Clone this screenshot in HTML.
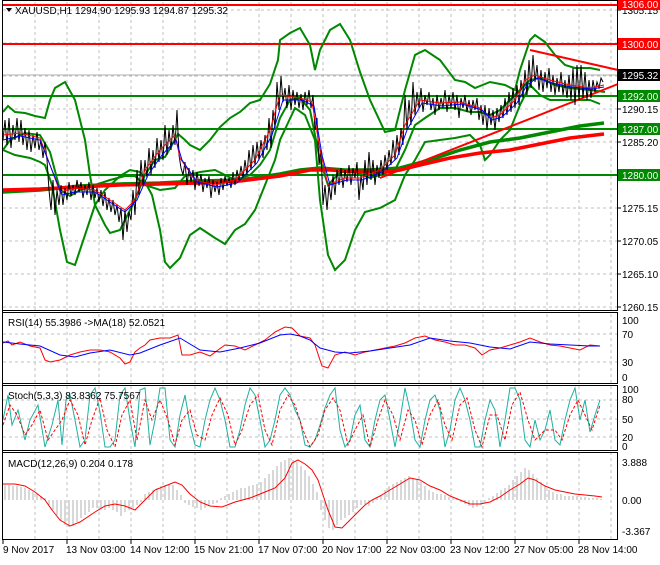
<!DOCTYPE html>
<html><head><meta charset="utf-8"><style>
html,body{margin:0;padding:0;background:#fff;}
body{width:660px;height:560px;overflow:hidden;position:relative;font-family:"Liberation Sans",sans-serif;}
svg text{font-family:"Liberation Sans",sans-serif;font-size:10px;fill:#000;}
</style></head><body>
<svg width="660" height="560" viewBox="0 0 660 560" xmlns="http://www.w3.org/2000/svg">
<defs>
<pattern id="vg" width="32" height="10" patternUnits="userSpaceOnUse" x="3">
<line x1="0.5" y1="0" x2="0.5" y2="3" stroke="#c0c0c0"/>
<line x1="0.5" y1="6" x2="0.5" y2="9" stroke="#c0c0c0"/>
</pattern>
</defs>
<!-- grids -->
<g stroke="#c0c0c0" stroke-dasharray="3,3">
<line x1="3" y1="10" x2="618" y2="10"/><line x1="3" y1="43" x2="618" y2="43"/><line x1="3" y1="76" x2="618" y2="76"/><line x1="3" y1="109" x2="618" y2="109"/><line x1="3" y1="142" x2="618" y2="142"/><line x1="3" y1="175" x2="618" y2="175"/><line x1="3" y1="208" x2="618" y2="208"/><line x1="3" y1="241" x2="618" y2="241"/><line x1="3" y1="274" x2="618" y2="274"/><line x1="3" y1="307" x2="618" y2="307"/>
<line x1="3" y1="334" x2="618" y2="334"/><line x1="3" y1="362" x2="618" y2="362"/>
<line x1="3" y1="400" x2="618" y2="400"/><line x1="3" y1="419" x2="618" y2="419"/><line x1="3" y1="437" x2="618" y2="437"/>
</g>
<g stroke="#c0c0c0" stroke-dasharray="3,3">
<line x1="35" y1="2" x2="35" y2="540"/><line x1="67" y1="2" x2="67" y2="540"/><line x1="99" y1="2" x2="99" y2="540"/><line x1="131" y1="2" x2="131" y2="540"/><line x1="163" y1="2" x2="163" y2="540"/><line x1="195" y1="2" x2="195" y2="540"/><line x1="227" y1="2" x2="227" y2="540"/><line x1="259" y1="2" x2="259" y2="540"/><line x1="291" y1="2" x2="291" y2="540"/><line x1="323" y1="2" x2="323" y2="540"/><line x1="355" y1="2" x2="355" y2="540"/><line x1="387" y1="2" x2="387" y2="540"/><line x1="419" y1="2" x2="419" y2="540"/><line x1="451" y1="2" x2="451" y2="540"/><line x1="483" y1="2" x2="483" y2="540"/><line x1="515" y1="2" x2="515" y2="540"/><line x1="547" y1="2" x2="547" y2="540"/><line x1="579" y1="2" x2="579" y2="540"/><line x1="611" y1="2" x2="611" y2="540"/>
</g>
<!-- main: horizontal levels -->
<line x1="3" y1="5" x2="618" y2="5" stroke="#f00" stroke-width="2"/>
<line x1="3" y1="44" x2="618" y2="44" stroke="#f00" stroke-width="2"/>
<line x1="3" y1="96" x2="618" y2="96" stroke="#080" stroke-width="2"/>
<line x1="3" y1="129" x2="618" y2="129" stroke="#080" stroke-width="2"/>
<line x1="3" y1="175" x2="618" y2="175" stroke="#080" stroke-width="2"/>
<line x1="3" y1="75" x2="618" y2="75" stroke="#b0b0b0"/>
<!-- bollinger -->
<g fill="none" stroke="#080" stroke-width="2">
<polyline points="3,112 8,106 15,112 25,113 35,116 45,118 50,100 55,88 65,82 75,100 85,140 90,175 95,205 105,225 110,233 120,230 135,200 145,175 155,160 165,157 172,145 178,134 185,140 190,145 200,150 210,140 220,127 230,118 240,112 250,103 260,100 270,84 278,60 280,40 290,33 300,28 310,45 315,70 320,50 330,30 340,24 350,40 360,72 370,100 385,132 395,130 405,90 415,55 425,50 440,60 455,80 465,82 475,88 490,82 505,85 515,90 520,70 530,40 535,35 545,42 555,55 565,65 575,68 590,68 600,70"/>
<polyline points="3,150 15,155 30,158 40,162 45,165 52,185 60,230 67,262 75,265 85,235 95,205 105,190 120,176 130,170 140,172 145,182 152,195 160,230 165,262 170,268 180,258 190,235 200,228 215,238 225,244 235,230 245,224 255,210 265,185 275,160 280,140 287,125 295,108 305,115 315,140 320,200 328,255 335,270 345,260 355,230 365,212 380,208 395,200 405,175 415,160 425,142 440,140 455,138 470,135 480,145 485,160 490,155 500,140 510,130 520,105 530,85 540,95 550,100 560,100 575,100 590,100 600,104"/>
<polyline points="3,150 10,140 25,133 40,135 50,152 60,190 70,196 80,190 95,185 110,180 125,176 135,176 145,185 160,190 175,188 185,176 200,172 215,170 225,175 235,180 250,175 260,165 270,150 280,118 290,100 300,98 310,110 320,160 328,185 340,172 355,172 370,178 380,175 395,170 405,150 415,125 425,118 440,108 455,108 470,112 480,112 490,115 500,110 510,100 520,90 530,80 540,78 555,85 570,88 590,90 605,92"/>
</g>
<!-- thick MAs -->
<polyline fill="none" stroke="#080" stroke-width="3.5" points="3,192 40,190 80,186 120,184 160,183 200,181 240,180 280,174 300,170 320,168 345,170 370,170 400,168 430,160 460,150 490,142 520,138 550,132 580,126 604,123"/>
<polyline fill="none" stroke="#f00" stroke-width="3.5" points="3,190 40,189 80,187 120,185 160,184 200,183 240,181 280,176 310,170 330,170 360,172 385,172 400,170 420,165 450,158 480,153 510,150 540,144 570,138 604,134"/>
<!-- trendlines -->
<line x1="380" y1="178" x2="618" y2="84" stroke="#f00" stroke-width="2"/>
<line x1="530" y1="50" x2="618" y2="70" stroke="#f00" stroke-width="2"/>
<!-- price bars -->
<polyline fill="none" stroke="#000" stroke-width="1" points="3,140 5,120 7,145 9,118 11,148 13,125 15,140 17,118 19,142 21,120 23,145 25,128 27,150 29,130 31,152 33,135 35,148 37,132 39,150 41,140 43,158 45,142 47,160 49,190 51,210 53,180 55,215 57,190 59,205 61,185 63,205 65,188 67,200 69,182 71,196 73,185 75,195 77,180 79,192 81,182 83,198 85,185 87,195 89,182 91,200 93,185 95,198 97,188 99,202 101,190 103,206 105,192 107,210 109,198 111,212 113,200 115,215 117,205 119,222 121,208 123,240 125,210 127,232 129,212 131,220 133,190 135,215 137,170 139,195 141,160 143,185 145,160 147,178 149,148 151,175 153,150 155,168 157,138 159,162 161,140 163,160 165,125 167,155 169,130 171,150 173,125 175,145 177,110 179,155 181,168 183,175 185,162 187,185 189,168 191,182 193,170 195,190 197,172 199,186 201,174 203,192 205,178 207,188 209,176 211,198 213,180 215,192 217,182 219,195 221,178 223,190 225,176 227,186 229,178 231,188 233,172 235,185 237,170 239,180 241,166 243,178 245,160 247,175 249,150 251,170 253,145 255,165 257,142 259,160 261,140 263,158 265,135 267,150 269,118 271,148 273,110 275,128 277,82 279,110 281,76 283,102 285,88 287,108 289,85 291,110 293,90 295,105 297,92 299,108 301,94 303,110 305,92 307,105 309,90 311,108 313,95 315,130 317,118 319,165 321,150 323,205 325,185 327,210 329,185 331,200 333,175 335,195 337,170 339,185 341,168 343,188 345,170 347,182 349,165 351,185 353,168 355,178 357,162 359,200 361,175 363,190 365,160 367,185 369,152 371,180 373,160 375,185 377,165 379,178 381,160 383,175 385,155 387,170 389,150 391,165 393,140 395,160 397,135 399,155 401,128 403,145 405,95 407,130 409,100 411,125 413,82 415,115 417,92 419,108 421,88 423,112 425,95 427,105 429,92 431,110 433,98 435,115 437,95 439,110 441,98 443,108 445,90 447,112 449,95 451,108 453,92 455,110 457,95 459,118 461,98 463,108 465,95 467,112 469,100 471,115 473,100 475,110 477,98 479,120 481,105 483,125 485,105 487,130 489,108 491,125 493,110 495,130 497,108 499,122 501,105 503,118 505,98 507,115 509,92 511,112 513,88 515,108 517,85 519,105 521,80 523,98 525,70 527,95 529,60 531,88 533,55 535,82 537,65 539,90 541,70 543,92 545,72 547,88 549,68 551,92 553,75 555,95 557,78 559,92 561,72 563,95 565,80 567,98 569,75 571,100 573,68 575,105 577,65 579,100 581,65 583,98 585,72 587,100 589,80 591,98 593,80 595,92 597,82 599,88 601,78 603,82"/>
<polyline fill="none" stroke="#f00" stroke-width="1" points="3,135 20,133 40,138 50,165 60,192 75,188 95,190 110,200 125,210 135,200 145,170 160,150 175,135 180,158 195,180 215,185 235,180 255,160 270,130 280,95 300,98 312,102 320,150 328,185 345,178 360,178 380,170 395,155 405,125 420,100 440,103 460,102 480,108 490,118 500,115 515,100 525,80 535,75 550,80 570,85 590,88 604,85"/>
<polyline fill="none" stroke="#00f" stroke-width="1" points="3,140 20,136 40,140 52,170 62,195 75,192 95,192 110,202 125,212 137,200 148,175 162,155 176,140 182,160 197,182 217,187 237,183 257,163 272,135 283,100 302,100 314,106 322,155 330,185 347,180 362,180 382,172 397,158 407,130 422,103 442,106 462,104 482,110 492,120 502,117 517,103 527,85 537,78 552,83 572,87 592,89 604,87"/>
<!-- RSI -->
<polyline fill="none" stroke="#f00" points="3,343 8,341 12,345 20,342 30,346 40,348 45,360 50,362 60,360 70,355 80,352 90,350 100,350 110,352 120,358 125,364 130,362 135,352 140,348 145,345 150,340 160,338 170,338 178,335 182,355 190,355 200,352 210,356 218,350 225,345 235,346 245,350 255,345 265,340 275,332 285,327 292,328 300,336 310,338 315,345 322,366 328,368 335,355 345,352 355,355 365,352 375,350 385,348 395,346 405,343 415,338 425,336 435,340 445,342 455,345 465,345 475,348 482,355 490,350 500,348 510,345 520,342 530,338 540,342 550,345 560,346 570,348 580,350 590,345 600,346"/>
<polyline fill="none" stroke="#00f" points="3,342 20,344 40,346 60,355 75,357 90,353 110,350 130,355 140,353 160,345 180,338 200,350 220,352 240,348 260,343 280,335 290,334 300,336 310,340 320,348 335,352 350,353 370,351 390,348 410,345 430,338 450,341 470,343 490,347 510,349 530,342 550,344 570,345 590,346 600,346"/>
<!-- Stoch -->
<polyline fill="none" stroke="#20b0a0" points="3,420 8,395 12,425 18,410 25,440 30,420 38,405 45,447 52,425 58,400 62,445 66,400 70,395 75,420 80,447 85,440 90,395 95,388 100,412 105,447 110,447 115,440 120,395 125,388 130,420 135,447 140,390 145,388 150,445 155,420 160,388 165,388 170,440 175,447 180,415 185,395 190,425 195,445 200,447 205,420 210,400 215,388 220,400 225,420 230,447 235,447 240,430 245,405 250,388 255,395 260,420 265,447 270,440 275,420 280,395 285,388 290,395 295,410 300,420 305,445 310,447 315,440 320,425 325,408 330,395 335,388 340,430 345,447 350,440 355,415 360,405 365,440 370,447 375,420 380,400 385,395 390,420 395,447 400,420 405,388 410,410 415,440 420,447 425,420 430,400 435,395 440,410 445,447 450,430 455,400 460,388 465,400 470,420 475,447 480,447 485,420 490,400 495,410 500,447 505,420 510,388 515,388 520,400 525,440 530,447 535,420 540,440 545,430 550,410 555,440 560,445 565,420 570,400 575,388 580,420 585,400 590,432 595,415 600,400"/>
<polyline fill="none" stroke="#f00" stroke-dasharray="3,2" points="3,425 10,405 17,415 25,435 32,425 40,410 48,440 55,430 62,420 70,400 78,415 85,445 92,420 100,398 107,430 115,447 122,415 130,400 137,440 145,400 152,420 160,400 168,420 175,445 182,420 190,410 197,435 205,440 212,415 220,398 228,415 235,445 242,430 250,405 258,395 265,430 272,445 280,410 288,395 295,405 303,430 310,447 318,435 325,410 333,398 340,410 348,445 355,430 363,415 370,447 378,420 385,400 393,415 400,440 408,410 415,420 422,445 430,415 438,400 445,425 452,440 460,405 467,398 475,430 482,447 490,415 497,415 505,440 512,405 520,392 528,420 535,440 545,430 555,430 562,440 570,415 578,400 585,415 592,430 600,405"/>
<!-- MACD -->
<g stroke="#b0b0b0">
<path d="M5 485V500M9 485V500M13 486V500M17 486V500M21 487V500M25 488V500M29 490V500M33 492V500M37 494V500M41 496V500M45 498V500M49 500V505M53 500V510M57 500V515M61 500V520M65 500V525M69 500V527M73 500V526M77 500V522M81 500V518M85 500V515M89 500V512M93 500V508M97 500V508M101 500V509M105 500V510M109 500V508M113 500V510M117 500V512M121 500V516M125 500V512M129 500V510M133 500V508M137 500V505M141 500V502M145 494V500M149 492V500M153 490V500M157 488V500M161 486V500M165 485V500M169 484V500M173 485V500M177 490V500M181 495V500M185 500V503M189 500V505M193 500V507M197 500V508M201 500V510M205 500V508M209 500V506M213 500V504M217 500V503M221 498V500M225 496V500M229 494V500M233 492V500M237 490V500M241 488V500M245 488V500M249 486V500M253 485V500M257 484V500M261 482V500M265 478V500M269 474V500M273 470V500M277 466V500M281 462V500M285 460V500M289 458V500M293 460V500M297 462V500M301 466V500M305 470V500M309 476V500M313 484V500M317 492V500M321 500V510M325 500V520M329 500V528M333 500V530M337 500V525M341 500V520M345 500V518M349 500V515M353 500V512M357 500V508M361 500V505M365 500V504M369 500V506M373 500V503M377 498V500M381 495V500M385 490V500M389 486V500M393 484V500M397 482V500M401 480V500M405 478V500M409 476V500M413 478V500M417 480V500M421 482V500M425 486V500M429 490V500M433 492V500M437 494V500M441 494V500M445 495V500M449 497V500M453 498V500M457 499V500M461 500V502M465 500V504M469 500V506M473 500V508M477 500V507M481 500V505M485 500V503M489 498V500M493 496V500M497 493V500M501 490V500M505 488V500M509 485V500M513 480V500M517 476V500M521 472V500M525 468V500M529 470V500M533 474V500M537 478V500M541 482V500M545 486V500M549 490V500M553 492V500M557 494V500M561 494V500M565 496V500M569 496V500M573 496V500M577 496V500M581 497V500M585 497V500M589 498V500M593 498V500M597 498V500M601 499V500"/>
</g>
<polyline fill="none" stroke="#f00" points="3,484 15,484 25,486 35,492 45,500 52,510 60,520 70,526 80,522 95,512 105,506 115,504 125,506 135,510 145,500 155,490 165,486 175,482 182,485 190,494 200,502 210,506 222,507 235,502 250,498 265,492 275,488 285,478 292,463 298,460 305,464 312,470 318,480 322,492 328,510 335,527 342,528 350,520 358,512 365,505 372,500 380,496 390,490 400,484 410,478 420,480 430,486 440,490 450,496 460,500 470,504 480,504 490,502 500,497 510,490 520,484 528,478 535,480 545,486 555,490 565,492 575,494 585,495 595,496 602,497"/>
<!-- panel borders -->
<g stroke="#000" fill="none">
<rect x="2.5" y="0.5" width="615" height="310"/>
<rect x="2.5" y="312.5" width="615" height="71"/>
<rect x="2.5" y="385.5" width="615" height="65"/>
<rect x="2.5" y="452.5" width="615" height="87"/>
</g>
<rect x="0" y="0" width="2" height="560" fill="#fff"/>
<line x1="2.5" y1="0" x2="2.5" y2="540" stroke="#000"/>
<!-- axis ticks -->
<g stroke="#000">
<line x1="3" y1="540" x2="3" y2="544"/><line x1="67" y1="540" x2="67" y2="544"/><line x1="131" y1="540" x2="131" y2="544"/><line x1="195" y1="540" x2="195" y2="544"/><line x1="259" y1="540" x2="259" y2="544"/><line x1="323" y1="540" x2="323" y2="544"/><line x1="387" y1="540" x2="387" y2="544"/><line x1="451" y1="540" x2="451" y2="544"/><line x1="515" y1="540" x2="515" y2="544"/><line x1="579" y1="540" x2="579" y2="544"/>
<line x1="618" y1="10" x2="621" y2="10"/><line x1="618" y1="109" x2="621" y2="109"/><line x1="618" y1="142" x2="621" y2="142"/><line x1="618" y1="208" x2="621" y2="208"/><line x1="618" y1="241" x2="621" y2="241"/><line x1="618" y1="274" x2="621" y2="274"/><line x1="618" y1="307" x2="621" y2="307"/>
</g>
<!-- labels -->
<path d="M6 8 L12 8 L9 12 Z" fill="#000"/>
<text x="15" y="14">XAUUSD,H1  1294.90 1295.93 1294.87 1295.32</text>
<text x="8" y="326">RSI(14) 55.3986  -&gt;MA(18) 52.0521</text>
<text x="8" y="399">Stoch(5,3,3) 83.8362 75.7567</text>
<text x="8" y="467">MACD(12,26,9) 0.204 0.178</text>
<g>
<text x="622" y="14">1305.15</text>
<text x="622" y="113">1290.15</text>
<text x="622" y="146">1285.20</text>
<text x="622" y="212">1275.15</text>
<text x="622" y="245">1270.05</text>
<text x="622" y="278">1265.10</text>
<text x="622" y="311">1260.15</text>
<text x="622" y="324">100</text><text x="622" y="338">70</text><text x="622" y="366">30</text><text x="622" y="381">0</text>
<text x="622" y="393">100</text><text x="622" y="403">80</text><text x="622" y="423">50</text><text x="622" y="441">20</text><text x="622" y="450">0</text>
<text x="622" y="466">3.888</text><text x="622" y="504">0.00</text><text x="622" y="535">-3.367</text>
</g>
<rect x="618" y="0" width="42" height="10" fill="#f00"/><text x="622" y="8" style="fill:#fff">1306.00</text>
<rect x="618" y="38" width="42" height="12" fill="#f00"/><text x="622" y="48" style="fill:#fff">1300.00</text>
<rect x="618" y="69" width="42" height="12" fill="#000"/><text x="622" y="79" style="fill:#fff">1295.32</text>
<rect x="618" y="90" width="42" height="12" fill="#080"/><text x="622" y="100" style="fill:#fff">1292.00</text>
<rect x="618" y="123" width="42" height="12" fill="#080"/><text x="622" y="133" style="fill:#fff">1287.00</text>
<rect x="618" y="169" width="42" height="12" fill="#080"/><text x="622" y="179" style="fill:#fff">1280.00</text>
<g>
<text x="3" y="553">9 Nov 2017</text>
<text x="66" y="553">13 Nov 03:00</text>
<text x="130" y="553">14 Nov 12:00</text>
<text x="194" y="553">15 Nov 21:00</text>
<text x="258" y="553">17 Nov 07:00</text>
<text x="322" y="553">20 Nov 17:00</text>
<text x="386" y="553">22 Nov 03:00</text>
<text x="450" y="553">23 Nov 12:00</text>
<text x="514" y="553">27 Nov 05:00</text>
<text x="578" y="553">28 Nov 14:00</text>
</g>
</svg>
</body></html>
